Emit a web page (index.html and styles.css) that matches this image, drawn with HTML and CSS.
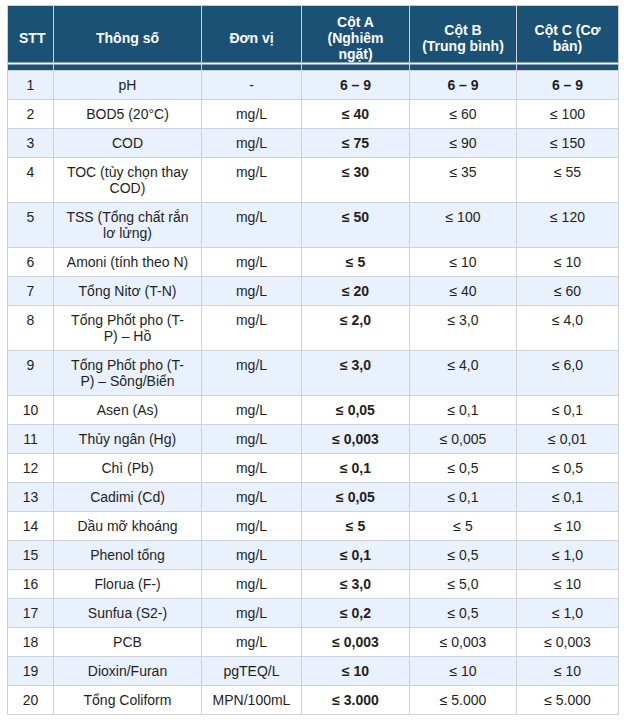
FILE: index.html
```html
<!DOCTYPE html>
<html lang="vi">
<head>
<meta charset="utf-8">
<title>Bảng thông số</title>
<link rel="stylesheet" href="styles.css">
</head>
<body>
<table class="spec">
  <colgroup>
    <col class="c-stt"><col class="c-name"><col class="c-unit"><col class="c-a"><col class="c-b"><col class="c-c">
  </colgroup>
  <thead>
    <tr>
      <th>STT</th>
      <th>Thông số</th>
      <th>Đơn vị</th>
      <th>Cột A (Nghiêm ngặt)</th>
      <th>Cột B (Trung bình)</th>
      <th>Cột C (Cơ bản)</th>
    </tr>
  </thead>
  <tbody>
    <tr><td>1</td><td>pH</td><td>-</td><td class="a">6 – 9</td><td class="a">6 – 9</td><td class="a">6 – 9</td></tr>
    <tr><td>2</td><td>BOD5 (20°C)</td><td>mg/L</td><td class="a">≤ 40</td><td>≤ 60</td><td>≤ 100</td></tr>
    <tr><td>3</td><td>COD</td><td>mg/L</td><td class="a">≤ 75</td><td>≤ 90</td><td>≤ 150</td></tr>
    <tr><td>4</td><td>TOC (tùy chọn thay COD)</td><td>mg/L</td><td class="a">≤ 30</td><td>≤ 35</td><td>≤ 55</td></tr>
    <tr><td>5</td><td>TSS (Tổng chất rắn lơ lửng)</td><td>mg/L</td><td class="a">≤ 50</td><td>≤ 100</td><td>≤ 120</td></tr>
    <tr><td>6</td><td>Amoni (tính theo N)</td><td>mg/L</td><td class="a">≤ 5</td><td>≤ 10</td><td>≤ 10</td></tr>
    <tr><td>7</td><td>Tổng Nitơ (T-N)</td><td>mg/L</td><td class="a">≤ 20</td><td>≤ 40</td><td>≤ 60</td></tr>
    <tr><td>8</td><td>Tổng Phốt pho (T-P) – Hồ</td><td>mg/L</td><td class="a">≤ 2,0</td><td>≤ 3,0</td><td>≤ 4,0</td></tr>
    <tr><td>9</td><td>Tổng Phốt pho (T-P) – Sông/Biển</td><td>mg/L</td><td class="a">≤ 3,0</td><td>≤ 4,0</td><td>≤ 6,0</td></tr>
    <tr><td>10</td><td>Asen (As)</td><td>mg/L</td><td class="a">≤ 0,05</td><td>≤ 0,1</td><td>≤ 0,1</td></tr>
    <tr><td>11</td><td>Thủy ngân (Hg)</td><td>mg/L</td><td class="a">≤ 0,003</td><td>≤ 0,005</td><td>≤ 0,01</td></tr>
    <tr><td>12</td><td>Chì (Pb)</td><td>mg/L</td><td class="a">≤ 0,1</td><td>≤ 0,5</td><td>≤ 0,5</td></tr>
    <tr><td>13</td><td>Cadimi (Cd)</td><td>mg/L</td><td class="a">≤ 0,05</td><td>≤ 0,1</td><td>≤ 0,1</td></tr>
    <tr><td>14</td><td>Dầu mỡ khoáng</td><td>mg/L</td><td class="a">≤ 5</td><td>≤ 5</td><td>≤ 10</td></tr>
    <tr><td>15</td><td>Phenol tổng</td><td>mg/L</td><td class="a">≤ 0,1</td><td>≤ 0,5</td><td>≤ 1,0</td></tr>
    <tr><td>16</td><td>Florua (F-)</td><td>mg/L</td><td class="a">≤ 3,0</td><td>≤ 5,0</td><td>≤ 10</td></tr>
    <tr><td>17</td><td>Sunfua (S2-)</td><td>mg/L</td><td class="a">≤ 0,2</td><td>≤ 0,5</td><td>≤ 1,0</td></tr>
    <tr><td>18</td><td>PCB</td><td>mg/L</td><td class="a">≤ 0,003</td><td>≤ 0,003</td><td>≤ 0,003</td></tr>
    <tr><td>19</td><td>Dioxin/Furan</td><td>pgTEQ/L</td><td class="a">≤ 10</td><td>≤ 10</td><td>≤ 10</td></tr>
    <tr><td>20</td><td>Tổng Coliform</td><td>MPN/100mL</td><td class="a">≤ 3.000</td><td>≤ 5.000</td><td>≤ 5.000</td></tr>
  </tbody>
</table>
</body>
</html>
```
FILE: styles.css
```css
html, body {
  margin: 0;
  padding: 0;
  background: #ffffff;
}

body {
  padding: 5px 0 0 7px;
  font-family: "Liberation Sans", Arial, sans-serif;
  font-size: 14px;
  line-height: 16px;
  color: #1f1f1f;
}

.spec {
  border-collapse: collapse;
  table-layout: fixed;
  width: 611px;
}

.c-stt { width: 46px; }
.c-name { width: 148px; }
.c-unit { width: 100px; }
.c-a { width: 108px; }
.c-b { width: 107px; }
.c-c { width: 102px; }

.spec th,
.spec td {
  border: 1px solid #cfd2d6;
  text-align: center;
}

.spec th {
  padding: 8px 11px;
  font-weight: bold;
  color: #ffffff;
  background: linear-gradient(to bottom,
    #1b5175 calc(100% - 8px),
    #f4f6f8 calc(100% - 8px),
    #f4f6f8 calc(100% - 6px),
    #1b5175 calc(100% - 6px));
  vertical-align: middle;
}

.spec td {
  padding: 6px 10px;
  vertical-align: top;
}

.spec td:nth-child(2) {
  padding-left: 12px;
  padding-right: 12px;
}

.spec tbody tr:nth-child(odd) td {
  background: #e9f1fd;
}

.spec td.a {
  font-weight: bold;
}
```
